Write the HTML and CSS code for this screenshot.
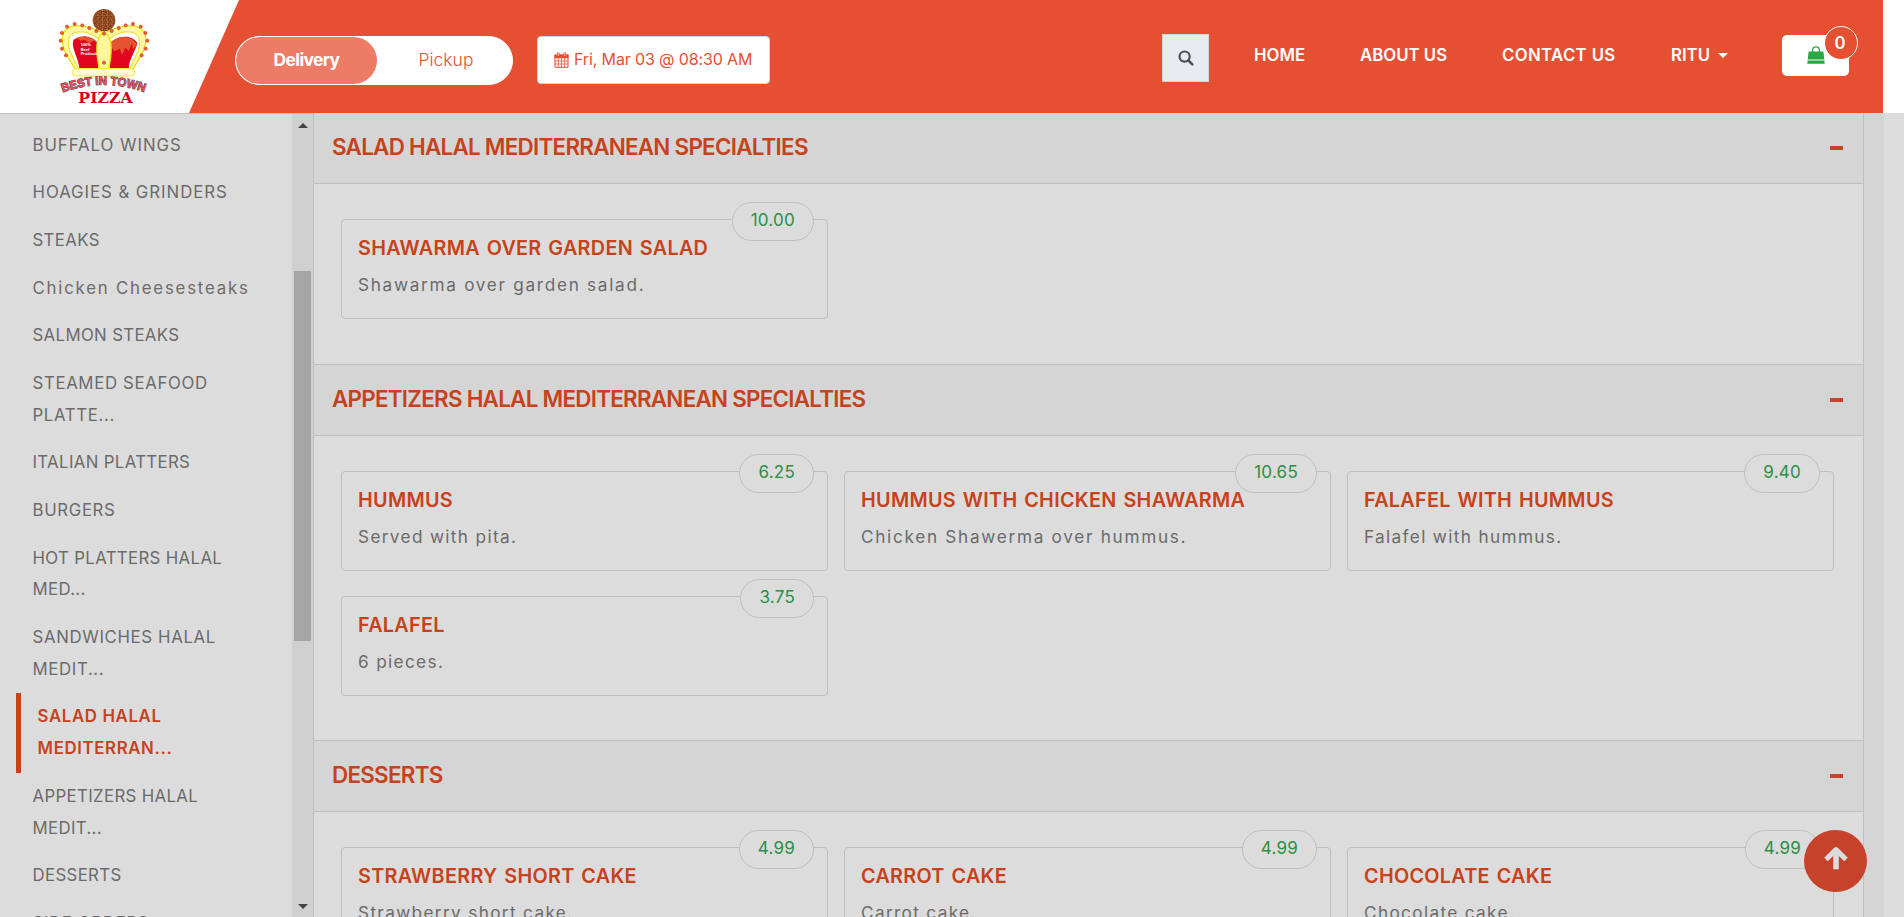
FILE: index.html
```html
<!DOCTYPE html>
<html lang="en">
<head>
<meta charset="utf-8">
<title>Best in Town Pizza</title>
<link rel="stylesheet" href="styles.css">
</head>
<body>
<header class="topbar">
  <div class="brand">
    <svg class="logo" viewBox="0 0 330 330" width="110" height="110">
      <defs>
        <pattern id="crust" width="14" height="14" patternUnits="userSpaceOnUse">
          <rect width="14" height="14" fill="#7b3418"/>
          <circle cx="3" cy="3" r="2.6" fill="#d09050"/><circle cx="10" cy="5" r="2.2" fill="#c07a3a"/>
          <circle cx="5" cy="10" r="2.4" fill="#c98b48"/><circle cx="12" cy="12" r="2.2" fill="#b86f38"/>
        </pattern>
        <path id="arc" d="M38 277Q162 232 284 277"/>
      </defs>
      <circle cx="162" cy="61" r="34" fill="url(#crust)"/>
      <path d="M75 208C66 190 52 172 43 150C32 118 36 92 58 82C92 68 128 86 162 98C196 86 232 68 266 82C288 92 292 118 281 150C272 172 258 190 249 208Z" fill="#fff7a0" stroke="#e8e010" stroke-width="4"/>
      <path d="M84 204C76 186 66 168 58 148C52 122 56 104 74 98C104 90 130 104 146 118L148 204ZM240 204C248 186 258 168 266 148C272 122 268 104 250 98C220 90 194 104 178 118L176 204Z" fill="#fff" stroke="#e8e010" stroke-width="3"/>
      <path d="M88 204C86 176 62 142 70 120C92 104 126 106 146 132L144 204ZM236 204C238 176 262 142 262 128C240 100 198 108 178 132L180 204Z" fill="#e10620"/>
      <path d="M70 120C92 104 126 106 146 132L142 128L130 122L118 130L104 120L92 122L84 116ZM178 132C198 108 240 100 262 134L248 148L246 130L236 154L226 142L216 166L210 146L192 154Z" fill="#e4552f"/>
      <path d="M162 98C136 106 136 150 148 208H176C188 150 188 106 162 98Z" fill="#fff79a" stroke="#e8e010" stroke-width="4"/>
      <rect x="67" y="206" width="188" height="22" rx="11" fill="#fffbd0" stroke="#f4e840" stroke-width="3"/>
      <g fill="#ef5a2b" stroke="#b5441f" stroke-width="1.5">
        <circle cx="48" cy="166" r="5"/><circle cx="36" cy="146" r="5"/><circle cx="32" cy="122" r="5"/><circle cx="36" cy="99" r="5"/><circle cx="51" cy="80" r="5"/><circle cx="74" cy="72" r="5"/><circle cx="97" cy="76" r="5"/><circle cx="118" cy="84" r="5"/><circle cx="139" cy="93" r="5"/><circle cx="162" cy="101" r="5"/>
        <circle cx="185" cy="93" r="5"/><circle cx="206" cy="84" r="5"/><circle cx="227" cy="76" r="5"/><circle cx="249" cy="72" r="5"/><circle cx="272" cy="80" r="5"/><circle cx="286" cy="99" r="5"/><circle cx="292" cy="122" r="5"/><circle cx="287" cy="146" r="5"/><circle cx="275" cy="166" r="5"/><circle cx="162" cy="188" r="5"/>
      </g>
      <g class="logo-note"><text x="92" y="138">100%</text><text x="92" y="152">Beef</text><text x="92" y="165">Products</text></g>
      <text class="logo-arc"><textPath href="#arc" textLength="250" lengthAdjust="spacingAndGlyphs">BEST IN TOWN</textPath></text>
      <text class="logo-pizza" x="85" y="308" textLength="163" lengthAdjust="spacingAndGlyphs">PIZZA</text>
    </svg>
  </div>
  <div class="bar">
    <div class="toggle"><span class="toggle-on">Delivery</span><span class="toggle-off">Pickup</span></div>
    <div class="date">
      <svg class="cal" viewBox="0 0 15 16" width="15" height="16"><path d="M1 3h13v12.3H1z" fill="none" stroke="#e65032"/><path d="M.5 2.5h14v3.7H.5zM3 .5h2.4v3H3zM9.6.5H12v3H9.6z" fill="#e65032"/><path d="M1 9h13M1 12h13M4.3 6v9M7.5 6v9M10.7 6v9" stroke="#e65032" stroke-width=".8"/><path d="M4.2 1v3M10.8 1v3" stroke="#fff" stroke-width=".7"/></svg>
      <span>Fri, Mar 03 @ 08:30 AM</span>
    </div>
    <nav class="nav">
      <span class="search"><svg viewBox="0 0 16 16" width="16" height="16"><circle cx="6.6" cy="6.6" r="5.1" fill="none" stroke="#495057" stroke-width="2.2"/><path d="M10.5 10.5L14.3 14.3" stroke="#495057" stroke-width="2.6" stroke-linecap="round"/></svg></span>
      <a class="w-home">HOME</a><a class="w-about">ABOUT US</a><a class="w-contact">CONTACT US</a>
      <a class="w-user">RITU<i class="caret"></i></a>
      <span class="cart">
        <svg viewBox="0 0 18 18" width="18" height="18"><path d="M1.6 5.5h14.8l.9 8H.7zM.6 14.5h16.8l.3 3.2H.3z" fill="#28a745"/><path d="M5.6 7.5V4.2a3.4 3.4 0 0 1 6.8 0v3.3" fill="none" stroke="#28a745" stroke-width="1.3"/></svg>
        <b class="count">0</b>
      </span>
    </nav>
  </div>
</header>
<div class="page">
  <aside class="side">
    <ul class="menu">
      <li class="wide">BUFFALO WINGS</li>
      <li class="wide">HOAGIES &amp; GRINDERS</li>
      <li class="snug">STEAKS</li>
      <li class="mixed">Chicken Cheesesteaks</li>
      <li class="snug">SALMON STEAKS</li>
      <li>STEAMED SEAFOOD<br>PLATTE...</li>
      <li class="snug">ITALIAN PLATTERS</li>
      <li>BURGERS</li>
      <li class="snug">HOT PLATTERS HALAL<br>MED...</li>
      <li>SANDWICHES HALAL<br>MEDIT...</li>
      <li class="active">SALAD HALAL<br>MEDITERRAN...</li>
      <li class="snug">APPETIZERS HALAL<br>MEDIT...</li>
      <li class="snug">DESSERTS</li>
      <li>SIDE ORDERS</li>
    </ul>
    <div class="scroll"><i class="up"></i><i class="thumb"></i><i class="down"></i></div>
  </aside>
  <main class="main">
    <section>
      <h2 class="head first">SALAD HALAL MEDITERRANEAN SPECIALTIES<i class="minus"></i></h2>
      <div class="cards">
        <article class="card"><span class="price">10.00</span><h3>SHAWARMA OVER GARDEN SALAD</h3><p>Shawarma over garden salad.</p></article>
      </div>
    </section>
    <section>
      <h2 class="head">APPETIZERS HALAL MEDITERRANEAN SPECIALTIES<i class="minus"></i></h2>
      <div class="cards tight">
        <article class="card"><span class="price">6.25</span><h3>HUMMUS</h3><p class="short">Served with pita.</p></article>
        <article class="card"><span class="price">10.65</span><h3>HUMMUS WITH CHICKEN SHAWARMA</h3><p>Chicken Shawerma over hummus.</p></article>
        <article class="card"><span class="price">9.40</span><h3>FALAFEL WITH HUMMUS</h3><p class="short">Falafel with hummus.</p></article>
        <article class="card"><span class="price">3.75</span><h3>FALAFEL</h3><p class="short">6 pieces.</p></article>
      </div>
    </section>
    <section>
      <h2 class="head">DESSERTS<i class="minus"></i></h2>
      <div class="cards">
        <article class="card"><span class="price">4.99</span><h3>STRAWBERRY SHORT CAKE</h3><p class="short">Strawberry short cake.</p></article>
        <article class="card"><span class="price">4.99</span><h3>CARROT CAKE</h3><p class="short">Carrot cake.</p></article>
        <article class="card"><span class="price">4.99</span><h3>CHOCOLATE CAKE</h3><p class="short">Chocolate cake.</p></article>
      </div>
    </section>
  </main>
  <div class="gutter"></div>
</div>
<a class="to-top"><svg viewBox="0 0 26 24" width="26" height="24"><path d="M3 13.5L13 3.6L23 13.5" fill="none" stroke="#dcdcdc" stroke-width="5" stroke-linejoin="round"/><path d="M13 5v18.3" stroke="#dcdcdc" stroke-width="5.6"/></svg></a>
</body>
</html>
```
FILE: styles.css
```css
* { box-sizing: border-box; }
body { margin: 0; height: 917px; overflow: hidden; background: #dcdcdc; font-family: Inter, "Liberation Sans", sans-serif; color: #6b6b6b; display: flex; flex-direction: column; }
ul, h2, h3, p { margin: 0; padding: 0; list-style: none; }

/* Top bar */
.topbar { height: 113px; flex: none; background: #fff; display: flex; padding-right: 21px; }
.brand { width: 189px; padding-left: 50px; }
.logo { display: block; }
.logo-note { font: bold 12px "Liberation Sans", sans-serif; fill: #fff; }
.logo-arc { font: bold 36px "Liberation Sans", sans-serif; fill: #f04a5c; stroke: #4a4a4a; stroke-width: 3; paint-order: stroke; }
.logo-pizza { font: bold 44px "DejaVu Serif", serif; fill: #d0021b; }
.bar { flex: 1; display: flex; align-items: flex-start; background: #e65032; clip-path: polygon(50px 0, 100% 0, 100% 100%, 0 100%); padding: 36px 0 0 46px; }
.toggle { width: 278px; height: 49px; border: 1px solid #fff; border-radius: 25px; background: #fff; display: flex; overflow: hidden; font-size: 17.5px; line-height: 46px; text-align: center; color: #e65032; }
.toggle-on { width: 141px; border-radius: 25px; background: #ed7b65; color: #fff; font-weight: 700; letter-spacing: -.65px; }
.toggle-off { flex: 1; padding-left: 3px; font-weight: 300; letter-spacing: 0; }
.date { width: 233px; height: 48px; margin-left: 24px; border: 1px solid #ced4da; border-radius: 4px; background: #fff; color: #e65032; display: flex; align-items: center; padding-left: 16px; gap: 5px; font-size: 16px; letter-spacing: -.13px; white-space: nowrap; }
.date span { margin-top: -3px; }
.nav { margin-left: auto; margin-top: -2px; padding-right: 34px; display: flex; align-items: flex-start; color: #fff; font-size: 16.8px; font-weight: 600; line-height: 43px; }
.nav a { white-space: nowrap; margin-right: 55px; height: 43px; }
.w-home { width: 51px; letter-spacing: 0; }
.w-about { width: 87px; letter-spacing: 0; }
.w-contact { width: 114px; letter-spacing: .35px; }
.w-user { width: 57px; display: flex; align-items: center; justify-content: space-between; }
.nav .w-user { margin-right: 54px; }
.caret { border: 5px solid transparent; border-top-color: #fff; border-bottom: 0; }
.search { width: 47px; height: 48px; margin-right: 45px; background: #e9ecef; border: 1px solid #ced4da; display: flex; align-items: center; justify-content: center; }
.cart { position: relative; width: 67px; height: 41px; margin-top: 1px; background: #fff; border-radius: 5px; display: flex; padding: 11px 0 0 25px; }
.count { position: absolute; left: 42px; top: -9px; width: 34px; height: 34px; padding-right: 2px; border: 1px solid #fff; border-radius: 50%; background: #e65032; font-weight: 600; line-height: 33px; text-align: center; }

/* Page columns */
.page { flex: 1; min-height: 0; display: flex; }
.side { width: 314px; border-top: 1px solid #bfbfbf; border-right: 1px solid #bfbfbf; display: flex; overflow: hidden; }
.menu { flex: 1; padding: 7.5px 0 0 16px; font-size: 16.8px; line-height: 31.68px; letter-spacing: .65px; }
.menu li { padding: 8px 0 8px 16.5px; white-space: nowrap; }
.menu .wide { letter-spacing: .95px; }
.menu .snug { letter-spacing: .35px; }
.menu .mixed { letter-spacing: 1.8px; }
.menu .active { border-left: 5px solid #c7421a; color: #c7421a; font-weight: 600; }
.scroll { width: 21px; background: #d0d0d0; display: flex; flex-direction: column; align-items: center; padding: 9px 0 8px 0; }
.up { border: 5px solid transparent; border-bottom-color: #444; border-top: 0; }
.down { border: 5px solid transparent; border-top-color: #444; border-bottom: 0; margin-top: auto; }
.thumb { width: 17px; height: 370px; margin-top: 143px; background: #a6a6a6; }
.main { flex: 1; overflow: hidden; }
.gutter { width: 41px; border-left: 1px solid #bfbfbf; background: linear-gradient(90deg, #d5d5d5 20px, #dcdcdc 20px); }

/* Menu sections */
.head { height: 72px; border: solid #bfbfbf; border-width: 1px 0; background: #d5d5d5; color: #c7421a; display: flex; align-items: center; justify-content: space-between; padding: 0 20px 3px 18px; font-size: 22.4px; font-weight: 600; letter-spacing: -.73px; white-space: nowrap; }
.first { height: 71px; border-top: 0; }
.minus { width: 13px; height: 4px; margin-top: 2px; background: #c6422b; }
.cards { display: grid; grid-template-columns: repeat(3, 487px); gap: 25px 16px; padding: 35px 0 45px 27px; }
.tight { padding-bottom: 44px; }
.card { position: relative; height: 100px; border: 1px solid #bfbfbf; border-radius: 4px; padding: 11px 16px 0; white-space: nowrap; }
.card h3 { color: #c7421a; font-size: 19.8px; line-height: 34px; font-weight: 600; letter-spacing: .3px; word-spacing: 1.5px; }
.card p { margin-top: 3px; font-size: 17.2px; line-height: 34px; letter-spacing: 1.7px; }
.card .short { letter-spacing: 1.35px; }
.price { position: absolute; right: 13px; top: -18px; height: 39px; padding: 0 18px; border: 1px solid #bfbfbf; border-radius: 20px; background: #dcdcdc; color: #2b8f45; font-size: 17px; line-height: 35px; letter-spacing: .25px; }
.to-top { position: absolute; left: 1804px; top: 830px; width: 63px; height: 62px; border-radius: 50%; background: #c6422b; display: flex; justify-content: center; padding-top: 16px; }
```
